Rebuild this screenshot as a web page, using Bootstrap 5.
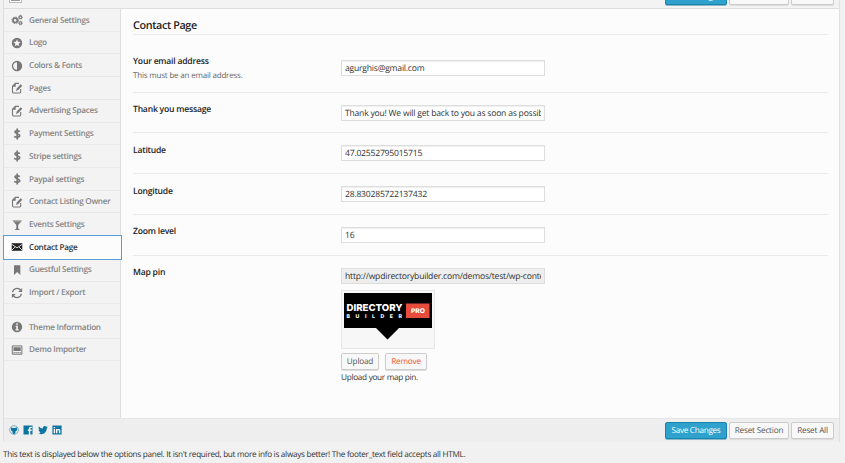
<!DOCTYPE html>
<html lang="en">
<head>
<meta charset="utf-8">
<title>Contact Page</title>
<link rel="stylesheet" href="https://cdn.jsdelivr.net/npm/bootstrap@5.3.0/dist/css/bootstrap.min.css">
<style>
html,body{height:463px;overflow:hidden}
body{font:8.2px/12px "Open Sans",sans-serif;color:#333;background:#f1f1f1;text-rendering:geometricPrecision;letter-spacing:-.29px}
.panel{width:837px;height:442px;margin-left:3px;border:1px solid #e0e0e0;border-top:0}
.topbar{height:9px;background:#f3f3f3;border-bottom:1px solid #dedede;padding:0 5px;overflow:hidden}
.expander{width:13px;height:3px;border:1px solid #bbb;border-top:0;background:#fff;position:relative}
.expander::after{content:"";position:absolute;left:1px;right:1px;top:0;height:1px;background:#999}
.actions{gap:2px}
.wpbtn{font:8.2px/14px "Open Sans",sans-serif;letter-spacing:-.2px;height:17px;padding:1px 0 0;border:1px solid #ccc;border-radius:2px;background:#f8f8f8;color:#555;box-shadow:0 1px 0 #ddd;white-space:nowrap;text-align:center;text-rendering:geometricPrecision}
.wpbtn.save{background:#2ea2cc;border-color:#1b84ad;color:#fff;box-shadow:0 1px 0 #8cb9ca;letter-spacing:-.3px}
.w-save{width:62px}.w-section{width:60px}.w-all{width:43px}
.w-upload{width:38px}.w-remove{width:42px;margin-left:6px}
.wpbtn.w-remove{color:#ef521d}
.topbar .wpbtn{margin-top:-12px}
.middle{height:408.5px}
.side{width:117px;background:#f3f3f3;border-right:1px solid #dedede}
.side a{height:22.72px;border-bottom:1px solid #e9e9e9;color:#858585;font-weight:600;font-size:8.2px;text-decoration:none;padding:1.5px 0 0 6.5px;white-space:nowrap}
.side a svg{width:12px;height:12px;fill:#777;margin-right:6.5px;margin-top:-1px;flex:none}
.side a.on{color:#333;background:#fcfcfc;width:119px;margin-left:-1px;padding-top:.5px;border:1px solid #5b9dd9;height:24.7px;margin-top:-1px;margin-bottom:-1px;position:relative}
.side a.on svg{fill:#222}
.side .gap{height:11.6px;border-bottom:1px solid #e9e9e9}
.main{background:#fcfcfc;padding:0 11px 0 12px}
.main h1{font-size:10.8px;letter-spacing:-.38px;line-height:14px;font-weight:600;color:#222;margin:0;padding-top:9.6px;height:26px;border-bottom:1px solid #eaeaea}
.field{height:40.8px;border-bottom:1px solid #eaeaea}
.field.first{height:57.5px}.field.pin{border:0;height:150px}
.field .lab{width:208px;padding-top:10.6px;font-weight:600;font-size:8.6px;letter-spacing:-.22px;color:#222;flex:none}
.field.first .lab{padding-top:20px}
.field .hint{font-weight:400;color:#666;font-size:8px;letter-spacing:-.19px;margin-top:2.5px}
.field .val{padding-top:12px}
.field.first .val{padding-top:25px}
.field input{display:block;width:204px;height:16px;border:1px solid #ddd;border-radius:0;background:#fff;padding:0 3px;font-size:8.6px;letter-spacing:-.22px;line-height:14px;color:#333;box-shadow:inset 0 1px 1px #f0f0f0;outline:0;text-rendering:geometricPrecision}
.field input[readonly]{background:#eee}
.shot{width:94px;height:59px;margin-top:6.5px;border:1px solid #e6e6e6;background:#f7f7f7;padding:2px;letter-spacing:0}
.shot svg{display:block}
.upl{margin-top:3.5px}
.cap{padding-top:2.5px}
.foot{height:24.5px;background:#eee;border-top:1px solid #e5e5e5;padding:0 5px 0 4.5px}
.foot .soc{gap:4.5px}
.foot .soc svg{width:10px;height:10px;fill:#0b74a2;display:block;flex:none;margin-top:-1px}
.note{padding:7px 0 0 3px;white-space:nowrap}
</style>
<script src="https://cdn.jsdelivr.net/npm/bootstrap@5.3.0/dist/js/bootstrap.bundle.min.js"></script>
</head>
<body>
<svg class="d-none">
<symbol id="edit" viewBox="0 0 12 12"><path d="M9.700 7v3.100q0 .9-.9.9H2.400q-.9 0-.9-.9V4.200L4.300 1.400H8" fill="none" stroke="#777" stroke-width="1.100"/><path d="M1.200 4.800 4.700 1v3.800zM5 8.900l.7-2.300 4-4.300 1.600 1.500-4 4.300z"/></symbol>
<symbol id="dollar" viewBox="0 0 12 12"><path d="M8.800 3.700C7.900 2.800 4 2.100 4 4.100c0 1.800 4.700 1.400 4.700 3.500C8.700 9.800 4.500 9.500 3.200 8.400M6.200 .5v11" fill="none" stroke="#777" stroke-width="1.700"/></symbol>
</svg>
<div class="panel">
  <div class="topbar d-flex justify-content-between">
    <div class="expander"></div>
    <div class="actions d-flex"><button class="wpbtn save w-save">Save Changes</button><button class="wpbtn w-section">Reset Section</button><button class="wpbtn w-all">Reset All</button></div>
  </div>
  <div class="middle d-flex">
    <nav class="side flex-shrink-0">
      <a href="#" class="d-flex align-items-center"><svg viewBox="0 0 12 12"><g fill="none" stroke="#777"><circle cx="4.200" cy="6.300" r="2.200" stroke-width="1.700"/><circle cx="4.200" cy="6.300" r="3.300" stroke-width="1" stroke-dasharray="1.300 1.290"/><circle cx="9.400" cy="3.200" r="1.300" stroke-width="1.100"/><circle cx="9.400" cy="9" r="1.300" stroke-width="1.100"/><circle cx="9.400" cy="3.200" r="2" stroke-width=".7" stroke-dasharray=".8 .8"/><circle cx="9.400" cy="9" r="2" stroke-width=".7" stroke-dasharray=".8 .8"/></g></svg>General Settings</a>
      <a href="#" class="d-flex align-items-center"><svg viewBox="0 0 12 12"><circle cx="6" cy="6" r="5.200"/><path fill="#f5f5f5" d="m6 2.300 1 2.500 2.700.2-2.100 1.700.7 2.600L6 7.900 3.700 9.300l.7-2.600L2.300 5 5 4.800z"/></svg>Logo</a>
      <a href="#" class="d-flex align-items-center"><svg viewBox="0 0 12 12"><circle cx="6" cy="6" r="4.500" fill="none" stroke="#777" stroke-width="1.300"/><path d="M6 1.500a4.500 4.500 0 0 1 0 9z"/></svg>Colors &amp; Fonts</a>
      <a href="#" class="d-flex align-items-center"><svg><use href="#edit"/></svg>Pages</a>
      <a href="#" class="d-flex align-items-center"><svg><use href="#edit"/></svg>Advertising Spaces</a>
      <a href="#" class="d-flex align-items-center"><svg><use href="#dollar"/></svg>Payment Settings</a>
      <a href="#" class="d-flex align-items-center"><svg><use href="#dollar"/></svg>Stripe settings</a>
      <a href="#" class="d-flex align-items-center"><svg><use href="#dollar"/></svg>Paypal settings</a>
      <a href="#" class="d-flex align-items-center"><svg><use href="#edit"/></svg>Contact Listing Owner</a>
      <a href="#" class="d-flex align-items-center"><svg viewBox="0 0 12 12"><path d="M1.500 1.500h9.500L7.200 6v3.600L9 10.900H3.500l1.800-1.300V6z"/><path d="M3 2.700h6.500" stroke="#ccc" stroke-width=".5"/></svg>Events Settings</a>
      <a href="#" class="on d-flex align-items-center"><svg viewBox="0 0 12 12"><path d="M.7 2.200h10.600v7.600H.7z"/><path d="m.7 3.300 5.300 3.500 5.300-3.500M.7 9.300l3.500-3.500M11.300 9.300 7.800 5.800" fill="none" stroke="#fcfcfc" stroke-width=".8"/></svg>Contact Page</a>
      <a href="#" class="d-flex align-items-center"><svg viewBox="0 0 12 12"><path d="M3 1.300h6.300v9.700L6.150 8 3 11z"/></svg>Guestful Settings</a>
      <a href="#" class="d-flex align-items-center"><svg viewBox="0 0 12 12"><path d="M1.600 5.200C2 .9 7.700.3 9.800 3.400M10.400 6.800C10 11.100 4.300 11.700 2.200 8.600" fill="none" stroke="#777" stroke-width="1.300"/><path d="M11.100 1v3.900H7.200zM.9 11V7.100h3.900z"/></svg>Import / Export</a>
      <div class="gap"></div>
      <a href="#" class="d-flex align-items-center"><svg viewBox="0 0 12 12"><circle cx="6" cy="6" r="5.200"/><path fill="#f3f3f3" d="M5.200 2.200h1.700v1.500H5.200zM4.600 4.800h2.300v3.500h.8v1.100H4.500V8.300h.8V5.900h-.7z"/></svg>Theme Information</a>
      <a href="#" class="d-flex align-items-center"><svg viewBox="0 0 12 12"><path fill="none" stroke="#777" d="M1.300 1.900h9.600v8.300H1.300z"/><path d="M2.500 3.200h7.200v3.900H2.500zM2.500 8h1.200v1.200H2.500zM4.500 8h1.200v1.200H4.500zM6.500 8h1.200v1.200H6.500zM8.500 8h1.200v1.200H8.500z"/></svg>Demo Importer</a>
    </nav>
    <main class="main flex-grow-1">
      <h1>Contact Page</h1>
      <div class="field first d-flex"><div class="lab">Your email address<div class="hint">This must be an email address.</div></div><div class="val"><input value="agurghis@gmail.com"></div></div>
      <div class="field d-flex"><div class="lab">Thank you message</div><div class="val"><input value="Thank you! We will get back to you as soon as possible!"></div></div>
      <div class="field d-flex"><div class="lab">Latitude</div><div class="val"><input value="47.02552795015715"></div></div>
      <div class="field d-flex"><div class="lab">Longitude</div><div class="val"><input value="28.830285722137432"></div></div>
      <div class="field d-flex"><div class="lab">Zoom level</div><div class="val"><input value="16"></div></div>
      <div class="field pin d-flex"><div class="lab">Map pin</div><div class="val"><input readonly value="http://wpdirectorybuilder.com/demos/test/wp-content/uploads/pin.png">
        <div class="shot"><svg width="88" height="47" viewBox="0 0 88 47"><path d="M0 0h88v35H55L43.500 46.500 32 35H0z"/><path fill="#e84c3d" d="M62 10.500h23.500V25H62z"/><g fill="#fff" font-family="Inter,sans-serif" font-weight="800"><text x="2.500" y="17.700" font-size="9.500" textLength="56" lengthAdjust="spacingAndGlyphs">DIRECTORY</text><text x="2.500" y="24.800" font-size="5.200" textLength="55.500">BUILDER</text><text x="67" y="20.100" font-size="6.300" textLength="14" lengthAdjust="spacingAndGlyphs">PRO</text></g></svg></div>
        <div class="d-flex upl"><button class="wpbtn w-upload">Upload</button><button class="wpbtn w-remove">Remove</button></div>
        <div class="cap">Upload your map pin.</div>
      </div></div>
    </main>
  </div>
  <div class="foot d-flex align-items-center justify-content-between">
    <div class="soc d-flex">
      <svg viewBox="0 0 10 10"><circle cx="5" cy="5" r="4.300" fill="none" stroke="#5a9fbd" stroke-width=".8"/><path d="m2.300 2.300 1.500.6h2.400l1.500-.6c.8 2.200.3 3.700-1.300 4.200v2L5 9l-1.400-.5v-2C2 6 1.500 4.500 2.300 2.300"/></svg>
      <svg viewBox="0 0 10 10"><path d="M.5.500h9v9H7.400V6h1.300V4.600H7.400v-.8q0-.7.7-.7h.8V1.700H7.500q-1.700 0-1.700 1.800v1.100h-1V6h1v3.500H.5z"/></svg>
      <svg viewBox="0 0 10 10"><path d="M.9 1.500C2 2.700 3.300 3.400 4.900 3.500 4.600 1.200 7 .4 8.300 1.700l1.200-.4-.6 1 .9-.2-1 1.100C8.900 7.800 4.400 10.700.3 8.400c1 .1 1.900-.2 2.700-.7-.9-.1-1.500-.6-1.700-1.300h.8C1.200 6.100.6 5.300.6 4.400l.8.2C.6 3.800.4 2.600.9 1.500"/></svg>
      <svg viewBox="0 0 10 10"><path d="M.4.500h9.200v9H.4z"/><path fill="#fff" d="M1.700 4h1.400v4.200H1.700zM1.700 1.900h1.400v1.300H1.700zM4 4h1.300v.6c.8-1.100 3-.9 3 .9v2.700H6.900V5.900c0-1.100-1.500-1-1.500 0v2.300H4z"/></svg>
    </div>
    <div class="actions d-flex"><button class="wpbtn save w-save">Save Changes</button><button class="wpbtn w-section">Reset Section</button><button class="wpbtn w-all">Reset All</button></div>
  </div>
</div>
<div class="note">This text is displayed below the options panel. It isn't required, but more info is always better! The footer_text field accepts all HTML.</div>
</body>
</html>
